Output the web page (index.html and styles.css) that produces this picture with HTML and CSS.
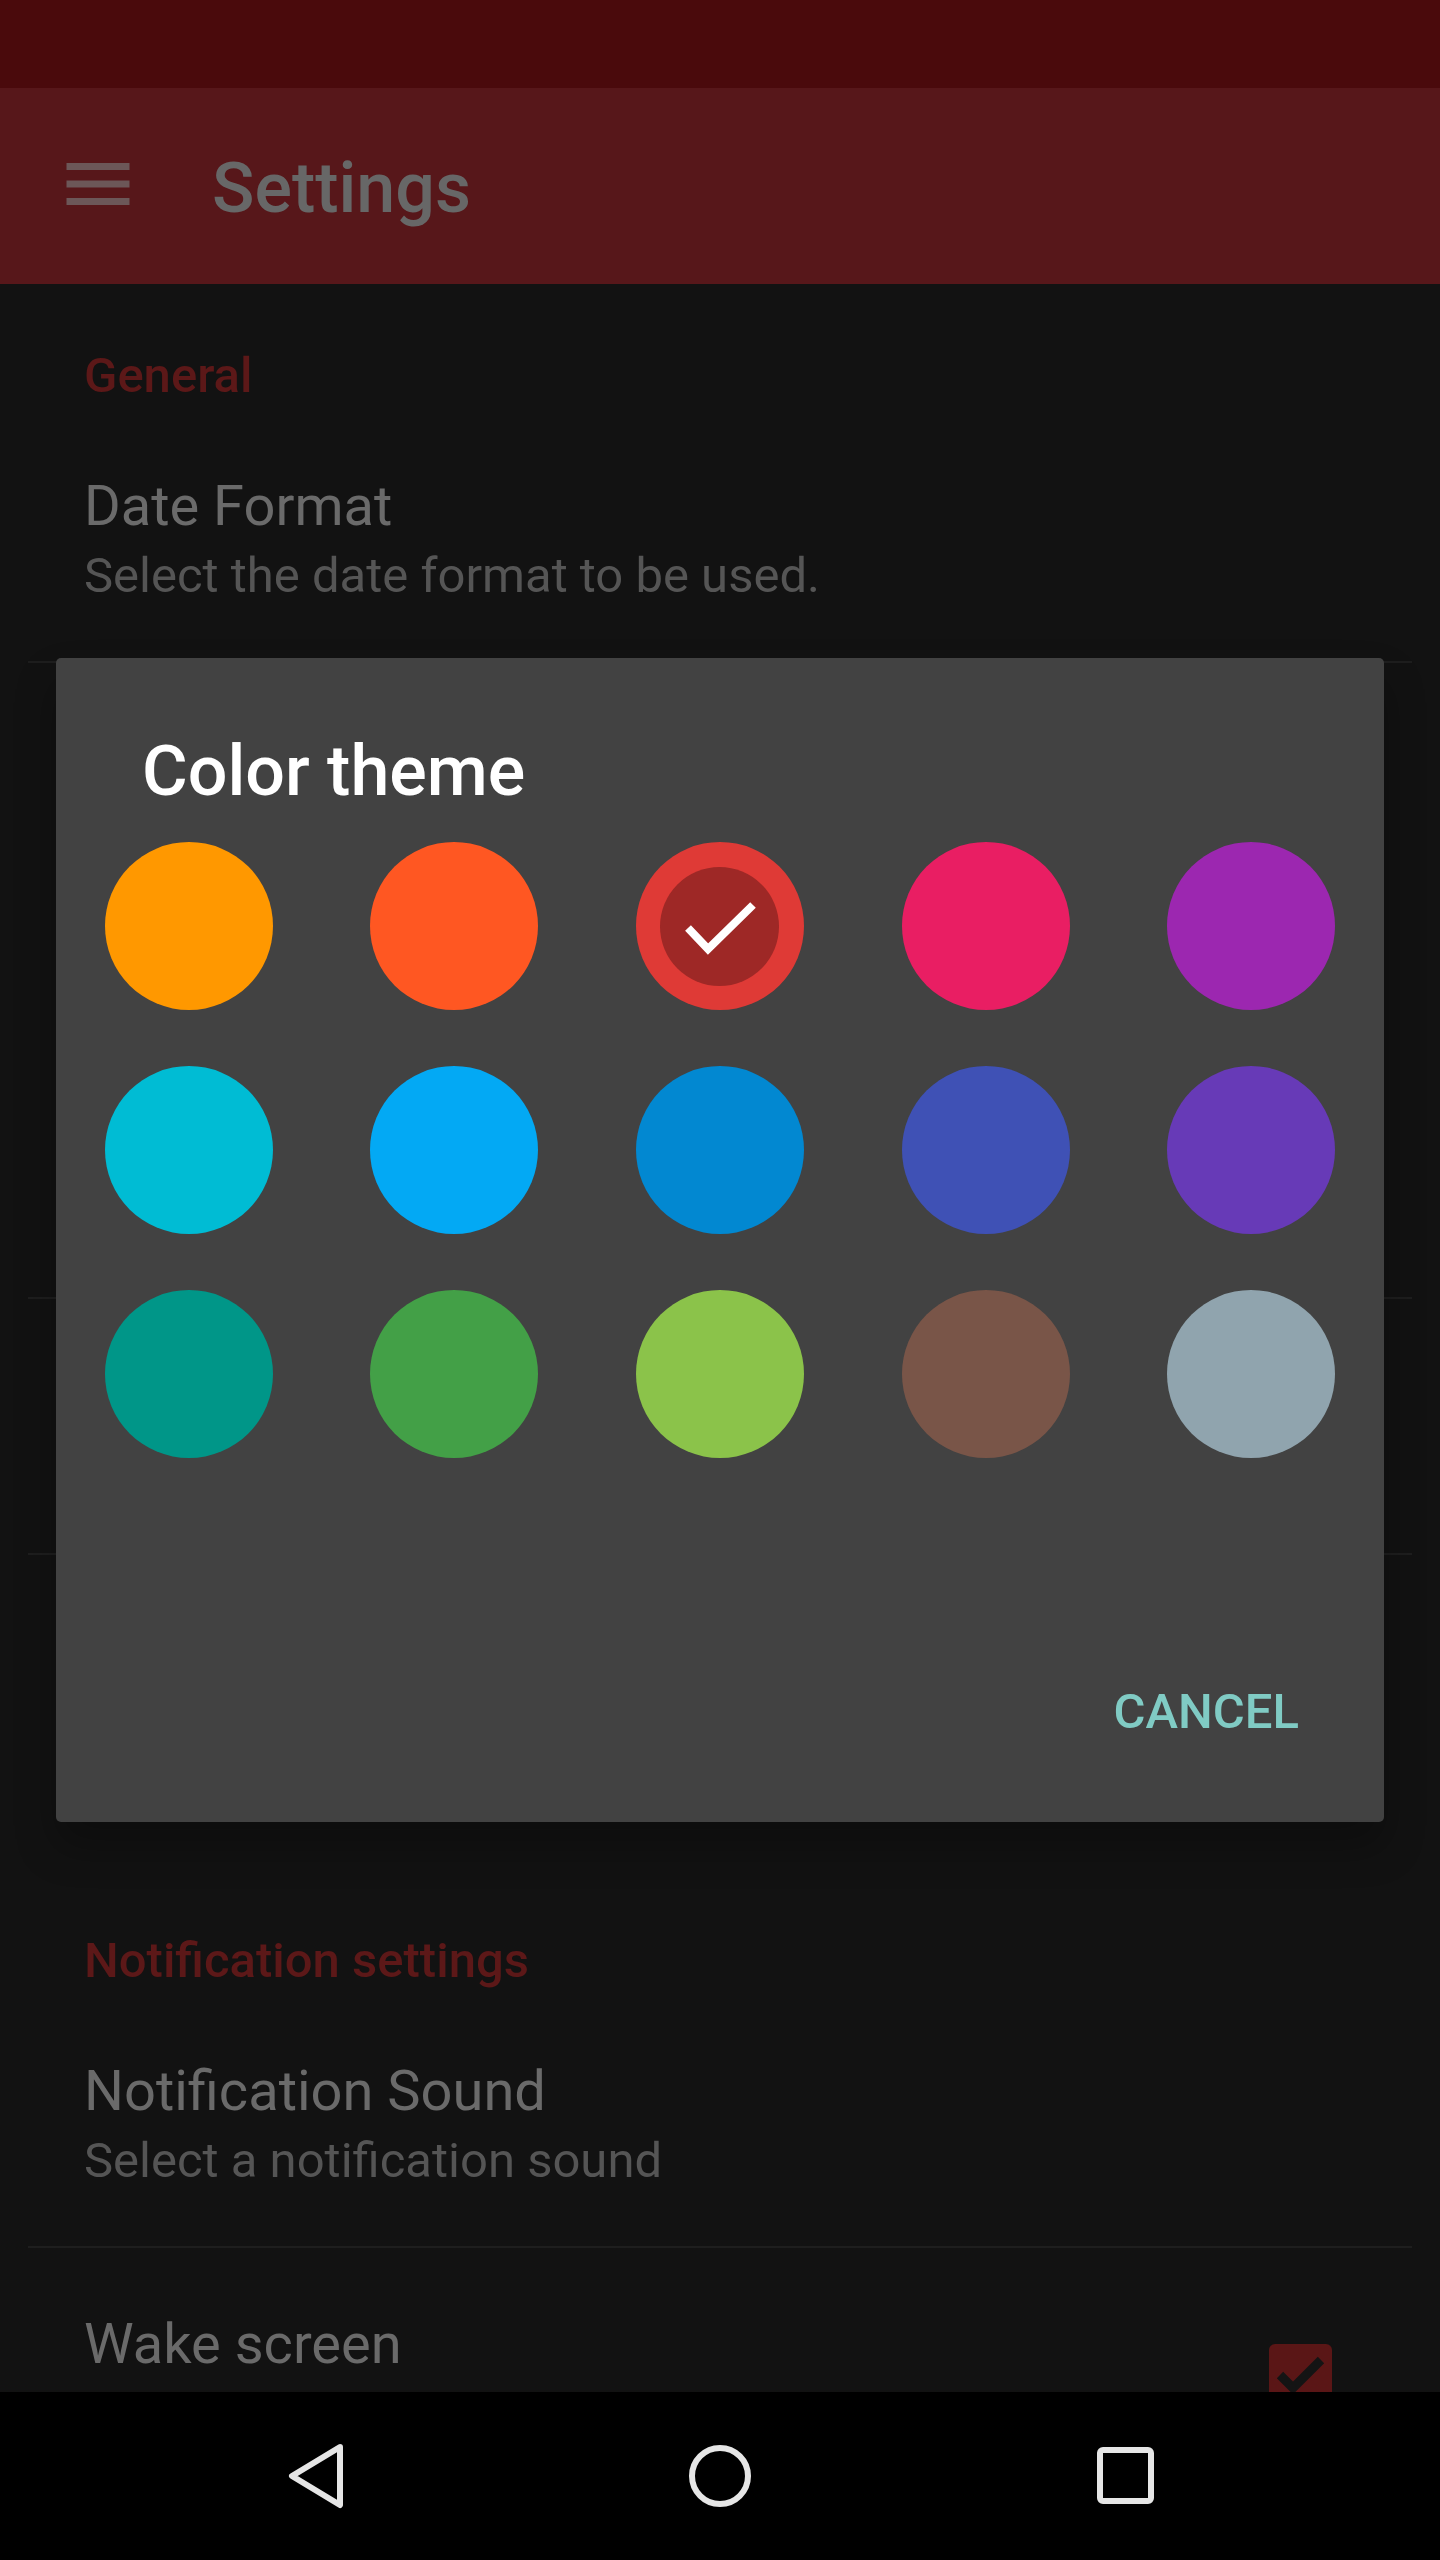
FILE: index.html
```html
<!DOCTYPE html>
<html lang="en">
<head>
    <meta charset="UTF-8">
    <meta name="viewport" content="width=device-width, initial-scale=1.0">
    <title>Settings</title>
    <link rel="stylesheet" href="styles.css">
</head>
<body>
  <div class="screen">
    <div class="status-bar"></div>

    <header class="app-bar">
      <svg class="menu-icon" width="84" height="84" viewBox="0 0 24 24">
        <path d="M3 18h18v-2H3v2zm0-5h18v-2H3v2zm0-7v2h18V6H3z"/>
      </svg>
      <h1>Settings</h1>
    </header>

    <main class="prefs">
      <div class="pref-category">General</div>
      <div class="pref divided">
        <div class="pref-text">
          <div class="pref-title">Date Format</div>
          <div class="pref-summary">Select the date format to be used.</div>
        </div>
      </div>

      <!-- rows hidden behind the dialog, only their dividers peek out -->
      <div class="pref divided covered-lg"></div>
      <div class="pref divided covered-sm"></div>
      <div class="pref covered-sm"></div>

      <div class="pref-category spaced">Notification settings</div>
      <div class="pref divided">
        <div class="pref-text">
          <div class="pref-title">Notification Sound</div>
          <div class="pref-summary">Select a notification sound</div>
        </div>
      </div>
      <div class="pref wake">
        <div class="pref-text">
          <div class="pref-title">Wake screen</div>
        </div>
        <span class="checkbox">
          <svg width="63" height="63" viewBox="0 0 63 63">
            <path d="M11 31 L24 44 L52 16"/>
          </svg>
        </span>
      </div>
    </main>

    <nav class="nav-bar">
      <svg width="80" height="80" viewBox="0 0 80 80">
        <path d="M65 11 L17 40 L65 69 Z"/>
      </svg>
      <svg width="80" height="80" viewBox="0 0 80 80">
        <circle cx="40" cy="40" r="28"/>
      </svg>
      <svg width="80" height="80" viewBox="0 0 80 80">
        <rect x="15" y="14" width="51" height="51" rx="3"/>
      </svg>
    </nav>

    <div class="dialog">
      <h2>Color theme</h2>
      <div class="swatches">
        <span class="swatch" style="background:#ff9800"></span>
        <span class="swatch" style="background:#ff5722"></span>
        <span class="swatch selected" style="background:#df3a36">
          <span class="swatch-inner">
            <svg width="119" height="119" viewBox="0 0 119 119">
              <path d="M28 61 L48 82 L93 38"/>
            </svg>
          </span>
        </span>
        <span class="swatch" style="background:#e91e63"></span>
        <span class="swatch" style="background:#9c27b0"></span>

        <span class="swatch" style="background:#00bcd4"></span>
        <span class="swatch" style="background:#03a9f4"></span>
        <span class="swatch" style="background:#0288d1"></span>
        <span class="swatch" style="background:#3f51b5"></span>
        <span class="swatch" style="background:#673ab7"></span>

        <span class="swatch" style="background:#009688"></span>
        <span class="swatch" style="background:#43a047"></span>
        <span class="swatch" style="background:#8bc34a"></span>
        <span class="swatch" style="background:#795548"></span>
        <span class="swatch" style="background:#90a4ae"></span>
      </div>
      <footer>
        <button type="button">Cancel</button>
      </footer>
    </div>
  </div>
</body>
</html>
```

FILE: styles.css
```css
body {
  margin: 0;
  background: #121212;
  font-family: Roboto, "Noto Sans", sans-serif;
}

.screen {
  position: relative;
  height: 2560px;
  display: flex;
  flex-direction: column;
  overflow: hidden;
}

.status-bar {
  height: 88px;
  background: #4a0a0c;
}

.app-bar {
  height: 196px;
  background: #57171a;
  display: flex;
  align-items: center;
  padding-left: 56px;
  gap: 72px;
}
.menu-icon {
  fill: #6c5758;
  margin-top: -4px;
}
.app-bar h1 {
  margin: 0;
  font-size: 70px;
  line-height: 80px;
  font-weight: 500;
  color: #676767;
  padding-top: 4px;
}

.prefs {
  flex: 1;
  overflow: hidden;
}

.pref-category {
  padding: 60px 84px 7px;
  font-size: 49px;
  line-height: 64px;
  font-weight: 500;
  color: #5c1818;
}
.pref-category.spaced {
  padding-top: 118px;
}

.pref {
  margin: 0 28px;
  padding: 55px 56px 55px;
  display: flex;
  align-items: center;
}
.pref.divided {
  padding-bottom: 53px;
  border-bottom: 2px solid #1e1e1e;
}
.pref.covered-lg {
  box-sizing: border-box;
  height: 636px;
}
.pref.covered-sm {
  box-sizing: border-box;
  height: 256px;
}
.pref.wake {
  padding-top: 60px;
  align-items: flex-start;
}
.pref-text {
  flex: 1;
}
.pref-title {
  font-size: 56px;
  line-height: 72px;
  color: #6a6a6a;
}
.pref-summary {
  margin-top: 2px;
  font-size: 49px;
  line-height: 64px;
  color: #555555;
}

.checkbox {
  width: 63px;
  height: 63px;
  margin-right: 24px;
  margin-top: 36px;
  border-radius: 6px;
  background: #5a1616;
}
.checkbox path {
  fill: none;
  stroke: #141414;
  stroke-width: 9;
}

.nav-bar {
  height: 168px;
  flex-shrink: 0;
  background: #000;
  display: flex;
  justify-content: center;
  align-items: center;
  gap: 325px;
}
.nav-bar svg * {
  fill: none;
  stroke: #e6e6e6;
  stroke-width: 6;
  stroke-linejoin: round;
}

/* dialog sits over the dimmed list */
.dialog {
  position: absolute;
  top: 658px;
  left: 56px;
  width: 1328px;
  background: #424242;
  border-radius: 5px;
  box-shadow: 0 24px 40px rgba(0, 0, 0, 0.28);
}
.dialog h2 {
  margin: 0;
  padding: 73px 86px 0;
  font-size: 70px;
  line-height: 80px;
  font-weight: 500;
  color: #ffffff;
}

.swatches {
  margin-top: 31px;
  display: grid;
  grid-template-columns: repeat(5, 1fr);
  row-gap: 56px;
}
.swatch {
  justify-self: center;
  width: 168px;
  height: 168px;
  border-radius: 50%;
  display: flex;
  align-items: center;
  justify-content: center;
}
.swatch-inner {
  width: 119px;
  height: 119px;
  border-radius: 50%;
  background: #9e2826;
}
.swatch-inner path {
  fill: none;
  stroke: #ffffff;
  stroke-width: 8;
}

.dialog footer {
  display: flex;
  justify-content: flex-end;
  padding: 222px 85px 78px 0;
}
.dialog footer button {
  background: none;
  border: 0;
  padding: 0;
  font-family: inherit;
  font-size: 49px;
  line-height: 64px;
  font-weight: 500;
  text-transform: uppercase;
  color: #80cbc4;
}
```
